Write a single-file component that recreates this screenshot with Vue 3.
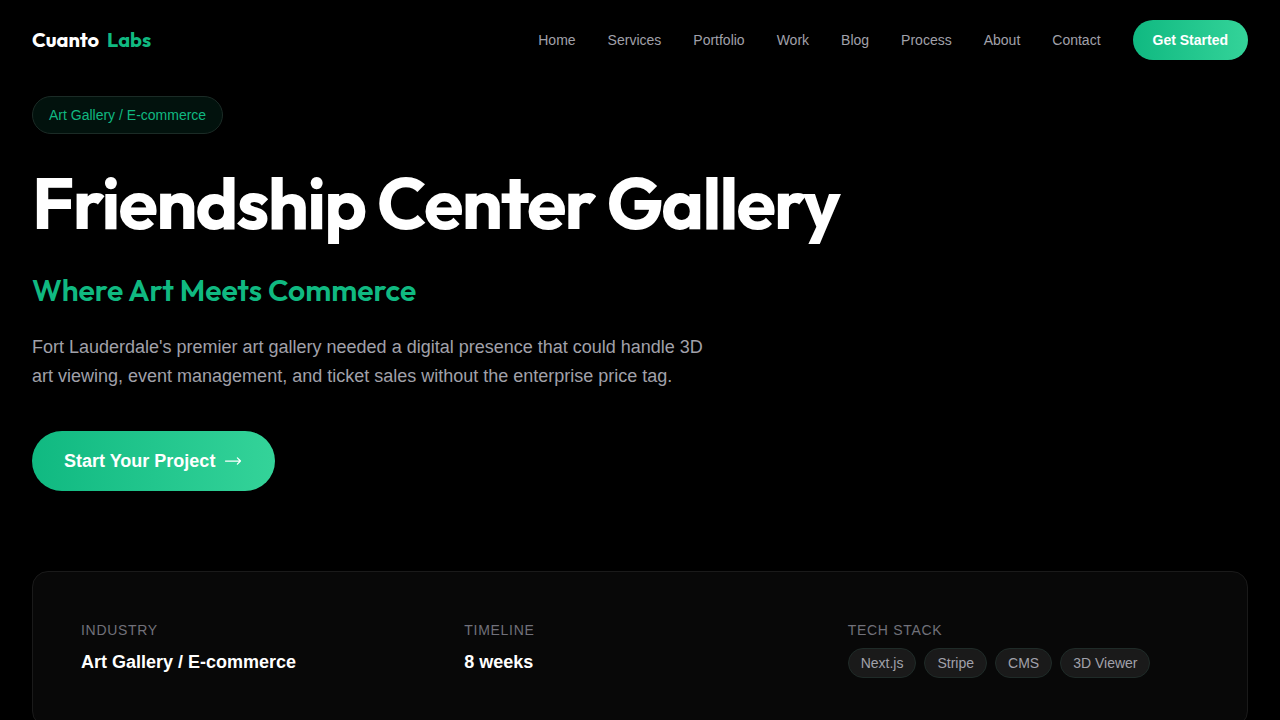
<script setup>
const links = ['Home', 'Services', 'Portfolio', 'Work', 'Blog', 'Process', 'About', 'Contact']
const stack = ['Next.js', 'Stripe', 'CMS', '3D Viewer']
</script>

<template>
  <div class="page">
    <header class="header">
      <a class="logo" href="#"><span>Cuanto</span><span class="accent">Labs</span></a>
      <nav class="nav" aria-label="Main">
        <a v-for="link in links" :key="link" class="link" href="#">{{ link }}</a>
        <a class="cta cta-small" href="#">Get Started</a>
      </nav>
    </header>

    <main class="main">
      <section class="hero">
        <span class="badge">Art Gallery / E-commerce</span>
        <h1 class="title">Friendship Center Gallery</h1>
        <p class="tagline">Where Art Meets Commerce</p>
        <p class="summary">
          Fort Lauderdale's premier art gallery needed a digital presence that could handle 3D
          art viewing, event management, and ticket sales without the enterprise price tag.
        </p>
        <a class="cta cta-large" href="#">
          <span>Start Your Project</span>
          <svg class="arrow" viewBox="0 0 24 24" aria-hidden="true">
            <path d="M17.25 8.25L21 12M21 12L17.25 15.75M21 12H3" />
          </svg>
        </a>
      </section>

      <dl class="facts">
        <div class="fact">
          <dt class="label">Industry</dt>
          <dd class="value">Art Gallery / E-commerce</dd>
        </div>
        <div class="fact">
          <dt class="label">Timeline</dt>
          <dd class="value">8 weeks</dd>
        </div>
        <div class="fact">
          <dt class="label">Tech Stack</dt>
          <dd class="chips">
            <span v-for="item in stack" :key="item" class="chip">{{ item }}</span>
          </dd>
        </div>
      </dl>
    </main>
  </div>
</template>

<style>
body {
  margin: 0;
  background: #000;
}
</style>

<style scoped>
.page {
  min-height: 100vh;
  background: #000;
  color: #fff;
  font-family: "Liberation Sans", Arial, sans-serif;
  font-size: 14px;
  line-height: 20px;
}
.page * {
  box-sizing: border-box;
}
a {
  color: inherit;
  text-decoration: none;
}
.header {
  display: flex;
  align-items: center;
  justify-content: space-between;
  padding: 20px 32px;
}
.logo {
  display: flex;
  gap: 8px;
  font-family: Outfit, Lato, sans-serif;
  font-size: 20px;
  font-weight: 700;
  line-height: 24px;
}
.accent {
  color: #10b981;
}
.nav {
  display: flex;
  align-items: center;
  gap: 32px;
}
.link {
  color: #a1a1aa;
}
.cta {
  display: inline-flex;
  align-items: center;
  border-radius: 32px;
  background: linear-gradient(90deg, #10b981, #34d399);
  font-weight: 700;
}
.cta-small {
  padding: 10px 20px;
}
.cta-large {
  gap: 8px;
  padding: 16px 32px;
  font-size: 18px;
  line-height: 28px;
}
.arrow {
  width: 20px;
  height: 20px;
  fill: none;
  stroke: currentColor;
  stroke-width: 1.5;
  stroke-linecap: round;
  stroke-linejoin: round;
}
.main {
  padding: 16px 32px 80px;
}
.hero {
  display: flex;
  flex-direction: column;
  align-items: flex-start;
}
.badge {
  padding: 8px 16px;
  border: 1px solid #1b2b26;
  border-radius: 20px;
  background: #02120d;
  color: #10b981;
}
.title {
  margin: 24px 0;
  font-family: Outfit, Lato, sans-serif;
  font-size: 72px;
  font-weight: 700;
  line-height: 90px;
  letter-spacing: -0.025em;
}
.tagline {
  margin: 0 0 24px;
  color: #10b981;
  font-family: Outfit, Lato, sans-serif;
  font-size: 30px;
  font-weight: 600;
  line-height: 37px;
}
.summary {
  max-width: 680px;
  margin: 0 0 40px;
  color: #a1a1aa;
  font-size: 18px;
  line-height: 29px;
}
.facts {
  display: grid;
  grid-template-columns: repeat(3, minmax(0, 1fr));
  gap: 32px;
  margin: 80px 0 0;
  padding: 48px;
  border: 1px solid #1a1a1a;
  border-radius: 16px;
  background: #080808;
}
.label {
  margin-bottom: 8px;
  color: #71717a;
  letter-spacing: 0.05em;
  text-transform: uppercase;
}
.value {
  margin: 0;
  font-size: 18px;
  font-weight: 700;
  line-height: 28px;
}
.chips {
  display: flex;
  flex-wrap: wrap;
  gap: 8px;
  margin: 0;
}
.chip {
  padding: 4px 12px;
  border: 1px solid #1f2b28;
  border-radius: 16px;
  background: #1a1a1a;
  color: #a1a1aa;
}
</style>
